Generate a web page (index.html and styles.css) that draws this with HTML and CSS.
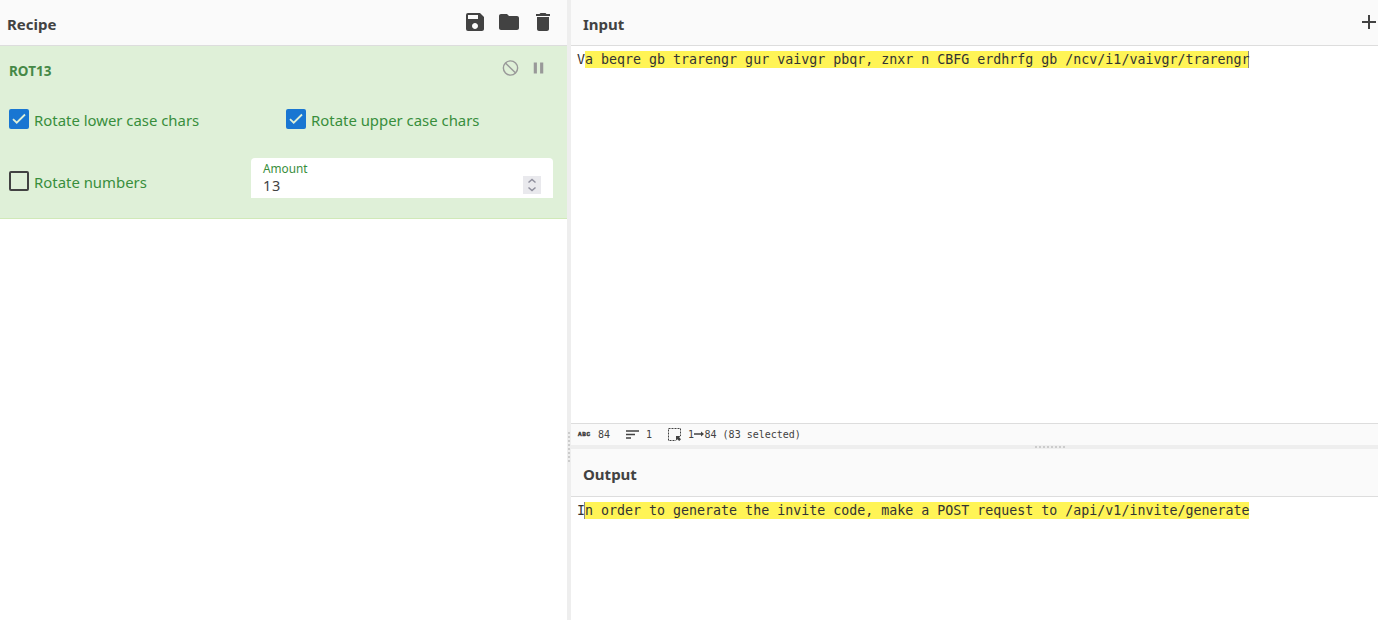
FILE: index.html
```html
<!DOCTYPE html>
<html lang="en">
<head>
<meta charset="utf-8">
<title>Recipe</title>
<link rel="stylesheet" href="styles.css">
</head>
<body>
<main class="workspace">
  <section class="recipe">
    <header class="title-bar recipe-title">
      <h2 class="title">Recipe</h2>
      <div class="controls">
        <svg class="icon" viewBox="0 0 24 24"><path d="M17 3H5a2 2 0 0 0-2 2v14a2 2 0 0 0 2 2h14c1.100 0 2-.9 2-2V7l-4-4zm-5 16c-1.660 0-3-1.340-3-3s1.340-3 3-3 3 1.340 3 3-1.340 3-3 3zm3-10H5V5h10v4z"/></svg>
        <svg class="icon" viewBox="0 0 24 24"><path d="M10 4H4c-1.100 0-1.990.9-1.990 2L2 18c0 1.100.9 2 2 2h16c1.100 0 2-.9 2-2V8c0-1.100-.9-2-2-2h-8l-2-2z"/></svg>
        <svg class="icon" viewBox="0 0 24 24"><path d="M6 19c0 1.100.9 2 2 2h8c1.100 0 2-.9 2-2V7H6v12zM19 4h-3.500l-1-1h-5l-1 1H5v2h14V4z"/></svg>
      </div>
    </header>
    <div class="operation">
      <div class="op-head">
        <h3 class="op-title">ROT13</h3>
        <div class="op-icons">
          <svg class="op-icon" viewBox="0 0 24 24"><g class="ring"><circle cx="12" cy="12" r="9"/><path d="M5.600 5.600l12.800 12.800"/></g></svg>
          <svg class="op-icon" viewBox="0 0 24 24"><path d="M6 19h4V5H6v14zm8-14v14h4V5h-4z"/></svg>
        </div>
      </div>
      <div class="arg-row arg-row-top">
        <label class="check check-lower"><span class="box checked"><svg class="tick" viewBox="0 0 20 20"><path d="M4 10.200L7.700 13.700L16 5.500"/></svg></span><span class="check-text">Rotate lower case chars</span></label>
        <label class="check"><span class="box checked"><svg class="tick" viewBox="0 0 20 20"><path d="M4 10.200L7.700 13.700L16 5.500"/></svg></span><span class="check-text">Rotate upper case chars</span></label>
      </div>
      <div class="arg-row arg-row-bottom">
        <label class="check check-numbers"><span class="box"></span><span class="check-text">Rotate numbers</span></label>
        <div class="amount">
          <div class="amount-copy"><span class="amount-label">Amount</span><span class="amount-value">13</span></div>
          <svg class="spinner" viewBox="0 0 18 18"><path d="M5.500 6.500L9 3.500l3.500 3M5.500 11.500L9 14.500l3.500-3"/></svg>
        </div>
      </div>
    </div>
  </section>
  <div class="gutter-v"><span class="dots-v"></span></div>
  <section class="io">
    <header class="title-bar io-title">
      <h2 class="title">Input</h2>
      <svg class="plus" viewBox="0 0 14 14"><path d="M7 0v14M0 7h14"/></svg>
    </header>
    <div class="editor input-editor"><div class="line">V<mark class="selection caret-end">a beqre gb trarengr gur vaivgr pbqr, znxr n CBFG erdhrfg gb /ncv/i1/vaivgr/trarengr</mark></div></div>
    <footer class="status">
      <span class="stat stat-length"><span class="abc">ABC</span><span>84</span></span>
      <span class="stat stat-lines"><svg class="lines-icon" viewBox="0 0 13 9"><path d="M0 1h13M0 4.500h9M0 8h5"/></svg><span>1</span></span>
      <span class="stat"><svg class="select-icon" viewBox="0 0 13 13"><path class="dashed" d="M.5.5h12v12H.5z"/><path class="arrow-bg" d="M8 8h5v5H8z"/><path d="M8 8h4.500l-1.300 1.300L13 11.200 11.200 13 9.300 11.200 8 12.500z"/></svg><span class="select-text">1<svg class="arrow" viewBox="0 0 10 6"><path d="M0 2.200h7V.5L10 3 7 5.500V3.700H0z"/></svg>84 (83 selected)</span></span>
    </footer>
    <div class="gutter-h"><span class="dots-h"></span></div>
    <header class="title-bar output-title">
      <h2 class="title">Output</h2>
    </header>
    <div class="editor"><div class="line">I<mark class="selection caret-start">n order to generate the invite code, make a POST request to /api/v1/invite/generate</mark></div></div>
  </section>
</main>
</body>
</html>
```
FILE: styles.css
```css
* { box-sizing: border-box; }
body { margin: 0; background: #fff; color: #424242; font-family: "Noto Sans", sans-serif; overflow: hidden; }
svg { display: block; fill: currentColor; flex: none; }
h2, h3 { margin: 0; }

.workspace { display: grid; grid-template-columns: 567px 4px minmax(0, 1fr); height: 620px; }
.recipe { min-width: 0; }
.title-bar { display: flex; align-items: center; justify-content: space-between; background: #fafafa; border-bottom: 1px solid #ddd; flex: none; }
.title { font-size: 15px; line-height: 20px; font-weight: 700; padding-top: 3px; }
.recipe-title { height: 46px; padding: 0 12px 0 7px; }
.controls { display: flex; gap: 10px; padding-bottom: 1px; }
.icon { width: 24px; height: 24px; }

.operation { height: 173px; background: #dff0d8; border-bottom: 1px solid #d0e9b8; color: #388e3c; padding: 12px 14px 0 9px; }
.op-head { display: flex; justify-content: space-between; height: 26px; }
.op-title { font-size: 13.500px; line-height: 26px; color: #468847; }
.op-icons { display: flex; gap: 9px; color: #999; padding: 0 5px 0 0; }
.op-icon { width: 19px; height: 20px; }
.ring { fill: none; stroke: currentColor; stroke-width: 1.800; }
.arg-row { display: flex; }
.arg-row-top { padding-top: 25px; }
.arg-row-bottom { padding-top: 28px; }
.check { display: flex; font-size: 14.900px; line-height: 20px; gap: 5px; flex: none; }
.check-lower { width: 277px; }
.check-numbers { width: 242px; padding-top: 13px; }
.check-text { padding-top: 1px; }
.box { width: 20px; height: 20px; border: 2px solid #424242; border-radius: 2px; flex: none; }
.checked { background: #1976d2; border: 0; }
.tick { width: 20px; height: 20px; fill: none; stroke: #dff0d8; stroke-width: 1.800; }
.amount { width: 302px; height: 40px; background: #fff; border-radius: 4px 4px 0 0; display: flex; justify-content: space-between; padding: 2px 12px 0; }
.amount-copy { display: flex; flex-direction: column; }
.amount-label { font-size: 11.800px; line-height: 16px; }
.amount-value { font-size: 14.500px; letter-spacing: .6px; line-height: 19px; color: #424242; }
.spinner { width: 18px; height: 18px; margin-top: 16px; background: #e9e9ed; fill: none; stroke: #8f8f9d; stroke-width: 1.500; }

.gutter-v { background: #eee; display: flex; justify-content: center; padding-top: 432px; }
.dots-v { width: 2px; height: 30px; background: repeating-linear-gradient(to bottom, #ccc 0 2px, transparent 2px 4px); }
.gutter-h { height: 4px; background: #eee; display: flex; align-items: center; padding-left: 464px; flex: none; }
.dots-h { width: 30px; height: 2px; background: repeating-linear-gradient(to right, #ccc 0 2px, transparent 2px 4px); }

.io { min-width: 0; display: flex; flex-direction: column; }
.io-title { height: 46px; padding: 0 2px 0 12px; }
.plus { width: 14px; height: 14px; margin-bottom: 1px; fill: none; stroke: #424242; stroke-width: 2; }
.output-title { height: 48px; padding-left: 12px; }
.editor { padding: 5px 0 0 6px; color: #333; font-family: "DejaVu Sans Mono", monospace; font-size: 13.300px; line-height: 17px; white-space: pre; }
.input-editor { height: 377px; flex: none; }
.line { display: flex; height: 17px; }
.selection { display: block; color: inherit; background: #fff456; }
.caret-end { box-shadow: inset -1px 0 #888; }
.caret-start { box-shadow: -1px 0 #888; }
.status { height: 22px; border-top: 1px solid #ddd; background: #fafafa; display: flex; align-items: center; padding-left: 7px; flex: none; font-family: "DejaVu Sans Mono", monospace; font-size: 10px; line-height: 14px; }
.stat { display: flex; align-items: center; }
.stat-length { width: 48px; gap: 8px; }
.stat-lines { width: 42px; gap: 7px; }
.abc { font: 700 6px/8px "Liberation Mono", monospace; width: 12px; padding-top: 1px; letter-spacing: .6px; -webkit-text-stroke: .5px currentColor; }
.lines-icon { width: 13px; height: 9px; fill: none; stroke: currentColor; stroke-width: 1.700; }
.select-icon { width: 13px; height: 13px; margin-right: 7px; }
.dashed { fill: none; stroke: currentColor; stroke-width: 1; stroke-dasharray: 2 1; }
.arrow-bg { fill: #fafafa; }
.select-text { display: flex; align-items: center; white-space: pre; }
.arrow { width: 10px; height: 6px; margin: 0 .5px 1px 0; }
```
